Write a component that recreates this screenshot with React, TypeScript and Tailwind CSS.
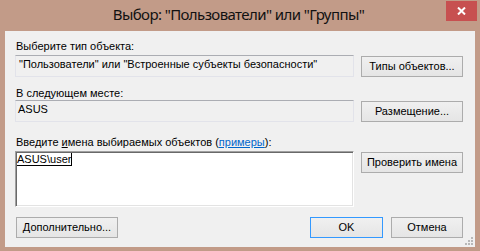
import React from "react";

function Btn({ children, className = "" }: { children: React.ReactNode; className?: string }) {
  return (
    <div
      className={`flex h-[21px] shrink-0 items-center justify-center border bg-linear-to-b from-[#f0f0f0] to-[#e5e5e5] text-[11px] leading-[13px] text-black ${className}`}
    >
      {children}
    </div>
  );
}

export default function App() {
  return (
    <div className="flex h-[251px] w-[480px] flex-col bg-[#c29b88] font-['Liberation_Sans',Arial,sans-serif]">
      {/* title bar */}
      <div className="relative flex h-[31px] shrink-0 justify-center pr-[3px] pt-[4px]">
        <span className="font-['Noto_Sans',sans-serif] text-[15px] leading-[20px] tracking-[-0.6px] text-[#111]">
          Выбор: "Пользователи" или "Группы"
        </span>
        <div className="absolute right-[3px] top-[1px] flex h-[20px] w-[31px] items-center justify-center bg-[#c75050]">
          <svg width="9" height="8" viewBox="0 0 9 8">
            <path d="M1 0.5 L8 7.5 M8 0.5 L1 7.5" stroke="#fff" strokeWidth="2" />
          </svg>
        </div>
      </div>

      {/* client */}
      <div className="relative mx-[5px] mb-[4px] flex flex-1 flex-col bg-[#f0f0f0] pl-[10px] pr-[12px]">
        <div className="mt-[9px] h-[13px] pl-[1px] text-[11px] leading-[13px] text-black">Выберите тип объекта:</div>

        <div className="mt-[2px] flex h-[22px] items-end gap-[7px]">
          <div className="h-[22px] w-[339px] border border-[#e2e3ea] border-t-[#abadb3] bg-[#f0f0f0] pl-[3px] pt-[2px] text-[11px] leading-[13px] text-black">
            "Пользователи" или "Встроенные субъекты безопасности"
          </div>
          <Btn className="w-[102px] border-[#acacac]">Типы объектов...</Btn>
        </div>

        <div className="mt-[10px] h-[13px] pl-[1px] text-[11px] leading-[13px] text-black">В следующем месте:</div>

        <div className="flex h-[22px] items-end gap-[7px]">
          <div className="h-[22px] w-[339px] border border-[#e2e3ea] border-t-[#abadb3] bg-[#f0f0f0] pl-[2px] pt-[2px] text-[11px] leading-[13px] text-black">
            ASUS
          </div>
          <Btn className="w-[102px] border-[#acacac]">Размещение...</Btn>
        </div>

        <div className="mt-[14px] h-[13px] pl-[1px] text-[11px] leading-[13px] text-black">
          Введите <span className="underline">и</span>мена выбираемых объектов (
          <span className="text-[#0066cc] underline">примеры</span>):
        </div>

        <div className="mt-[2px] flex items-start gap-[7px]">
          <div className="h-[56px] w-[339px] border border-[#a0a0a0] border-b-white border-r-white bg-white shadow-[inset_1px_1px_0_#696969,inset_-1px_-1px_0_#e3e3e3] pl-[1px] pt-[1px] text-[11px] leading-[13px] text-black">
            <span className="underline underline-offset-[2px]">ASUS\user</span>
            <span className="inline-block h-[13px] w-px bg-black align-top" />
          </div>
          <Btn className="mt-[1px] w-[102px] border-[#acacac]">Проверить имена</Btn>
        </div>

        <div className="mt-[10px] flex h-[21px] items-center">
          <Btn className="ml-[1px] w-[102px] border-[#acacac]">Дополнительно...</Btn>
          <div className="flex-1" />
          <Btn className="w-[73px] border-[#3399ff]">OK</Btn>
          <Btn className="ml-[8px] w-[72px] border-[#acacac]">Отмена</Btn>
        </div>

        <svg className="absolute bottom-[1px] right-[1px]" width="10" height="10" viewBox="0 0 10 10">
          <rect x="7" y="1" width="2" height="2" fill="#b8b8b8" />
          <rect x="4" y="4" width="2" height="2" fill="#b8b8b8" />
          <rect x="7" y="4" width="2" height="2" fill="#b8b8b8" />
          <rect x="1" y="7" width="2" height="2" fill="#b8b8b8" />
          <rect x="4" y="7" width="2" height="2" fill="#b8b8b8" />
          <rect x="7" y="7" width="2" height="2" fill="#b8b8b8" />
        </svg>
      </div>
    </div>
  );
}
